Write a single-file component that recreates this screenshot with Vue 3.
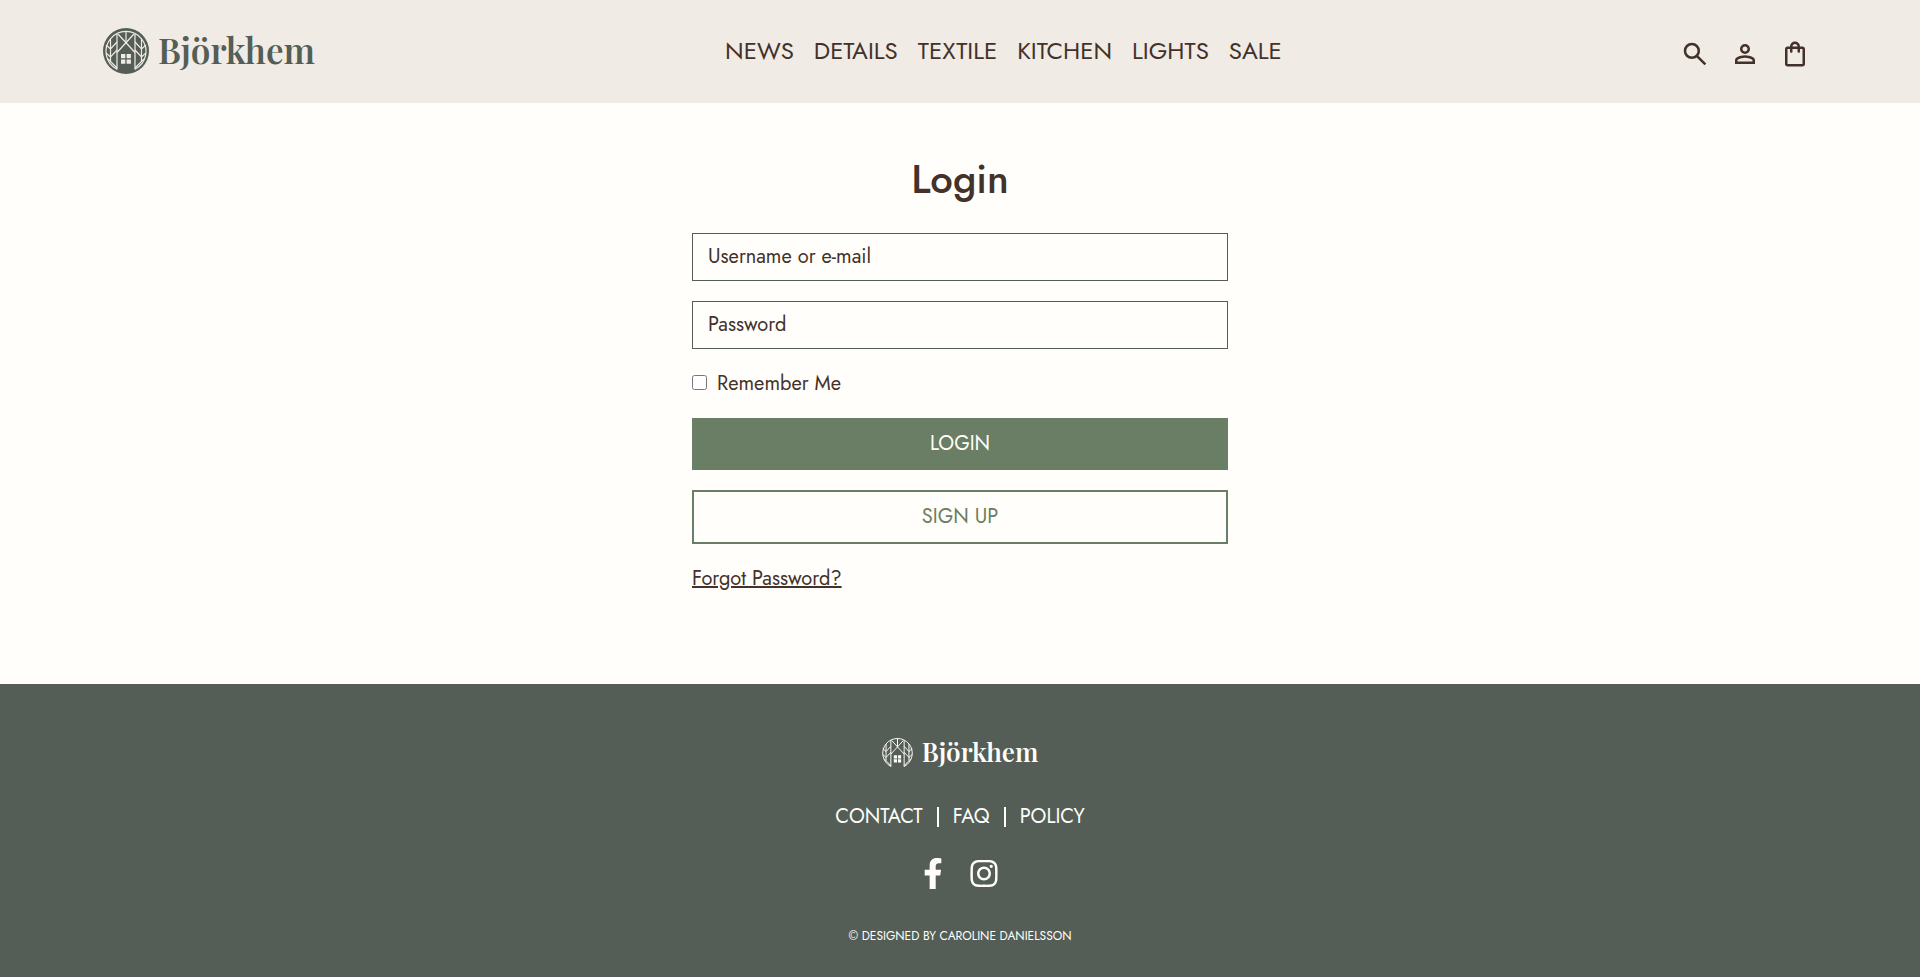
<script setup>
import { ref } from 'vue'

const categories = ['News', 'Details', 'Textile', 'Kitchen', 'Lights', 'Sale']
const footerLinks = ['Contact', 'FAQ', 'Policy']
const username = ref('')
const password = ref('')
const remember = ref(false)
</script>

<template>
  <div class="page">
    <header class="header">
      <a href="#" class="brand">
        <svg class="brand-mark" viewBox="0 0 46 46" aria-hidden="true">
          <circle cx="23" cy="23" r="23" fill="#545e56" />
          <g fill="none" stroke="#f0ebe5" stroke-width="1.2">
            <path d="M14 41.2A20 20 0 1 1 32 41.2" />
            <path d="M14 6V41.5M32 6V41.5M7.5 11V33M38.5 11V33M23 3V14" />
            <path d="M14 24.5L31 6M32 24.5L15 6" />
            <path d="M3 17L7.5 21L14 14M3 25L7.5 29L14 22M5 31L14 40" />
            <path d="M43 17L38.5 21L32 14M43 25L38.5 29L32 22M41 31L32 40" />
          </g>
          <path fill="#f0ebe5" d="M18 26h4.3v4.3H18zM23.6 26h4.3v4.3h-4.3zM18 31.5h4.3v4.3H18zM23.6 31.5h4.3v4.3h-4.3z" />
        </svg>
        <span>Björkhem</span>
      </a>
      <nav class="nav" aria-label="Categories">
        <a v-for="item in categories" :key="item" href="#">{{ item }}</a>
      </nav>
      <div class="tools">
        <button type="button" aria-label="Search">
          <svg viewBox="0 -960 960 960"><path d="M784-120 532-372q-30 24-69 38t-83 14q-109 0-184.5-75.5T120-580q0-109 75.5-184.5T380-840q109 0 184.5 75.5T640-580q0 44-14 83t-38 69l252 252-56 56ZM380-400q75 0 127.5-52.5T560-580q0-75-52.5-127.5T380-760q-75 0-127.5 52.5T200-580q0 75 52.5 127.5T380-400Z" /></svg>
        </button>
        <button type="button" aria-label="Account">
          <svg viewBox="0 -960 960 960"><path d="M480-480q-66 0-113-47t-47-113q0-66 47-113t113-47q66 0 113 47t47 113q0 66-47 113t-113 47ZM160-160v-112q0-34 17.5-62.5T224-378q62-31 126-46.5T480-440q66 0 130 15.5T736-378q29 15 46.5 43.5T800-272v112H160Zm80-80h480v-32q0-11-5.5-20T700-306q-54-27-109-40.5T480-360q-56 0-111 13.5T260-306q-9 5-14.5 14t-5.5 20v32Zm240-320q33 0 56.5-23.5T560-640q0-33-23.5-56.5T480-720q-33 0-56.5 23.5T400-640q0 33 23.5 56.5T480-560Z" /></svg>
        </button>
        <button type="button" aria-label="Shopping bag">
          <svg viewBox="0 -960 960 960"><path d="M240-80q-33 0-56.5-23.5T160-160v-480q0-33 23.5-56.5T240-720h80q0-66 47-113t113-47q66 0 113 47t47 113h80q33 0 56.5 23.5T800-640v480q0 33-23.5 56.5T720-80H240Zm0-80h480v-480h-80v80q0 17-11.5 28.5T600-520q-17 0-28.5-11.5T560-560v-80H400v80q0 17-11.5 28.5T360-520q-17 0-28.5-11.5T320-560v-80h-80v480Zm160-560h160q0-33-23.5-56.5T480-800q-33 0-56.5 23.5T400-720Z" /></svg>
        </button>
      </div>
    </header>

    <main class="main">
      <h1>Login</h1>
      <form class="form" @submit.prevent>
        <input v-model="username" class="field" type="text" placeholder="Username or e-mail" aria-label="Username or e-mail" />
        <input v-model="password" class="field" type="password" placeholder="Password" aria-label="Password" />
        <label class="remember">
          <input v-model="remember" type="checkbox" />
          <span>Remember Me</span>
        </label>
        <button type="submit" class="btn btn-solid">Login</button>
        <button type="button" class="btn btn-outline">Sign up</button>
        <a href="#" class="forgot">Forgot Password?</a>
      </form>
    </main>

    <footer class="footer">
      <a href="#" class="brand brand-small">
        <svg class="brand-mark" viewBox="2 2 42 42" aria-hidden="true">
          <g fill="none" stroke="#fffefa" stroke-width="1.3">
            <path d="M14 41.2A20 20 0 1 1 32 41.2" />
            <path d="M14 6V41.5M32 6V41.5M7.5 11V33M38.5 11V33M23 3V14" />
            <path d="M14 24.5L31 6M32 24.5L15 6" />
            <path d="M3 17L7.5 21L14 14M3 25L7.5 29L14 22M5 31L14 40" />
            <path d="M43 17L38.5 21L32 14M43 25L38.5 29L32 22M41 31L32 40" />
          </g>
          <path fill="#fffefa" d="M18 26h4.3v4.3H18zM23.6 26h4.3v4.3h-4.3zM18 31.5h4.3v4.3H18zM23.6 31.5h4.3v4.3h-4.3z" />
        </svg>
        <span>Björkhem</span>
      </a>
      <nav class="footer-nav" aria-label="Footer">
        <template v-for="(item, i) in footerLinks" :key="item">
          <span v-if="i" class="divider"></span>
          <a href="#">{{ item }}</a>
        </template>
      </nav>
      <div class="social">
        <a href="#" aria-label="Facebook">
          <svg width="20" height="31" viewBox="0 0 320 512"><path d="M279.14 288l14.22-92.66h-88.91v-60.13c0-25.35 12.42-50.06 52.24-50.06h40.42V6.26S260.43 0 225.36 0c-73.22 0-121.08 44.38-121.08 124.72v70.62H22.89V288h81.39v224h100.17V288z" /></svg>
        </a>
        <a href="#" aria-label="Instagram">
          <svg width="28" height="31" viewBox="0 0 448 512"><path d="M224.1 141c-63.6 0-114.9 51.3-114.9 114.9s51.3 114.9 114.9 114.9S339 319.5 339 255.9 287.7 141 224.1 141zm0 189.6c-41.1 0-74.7-33.5-74.7-74.7s33.5-74.7 74.7-74.7 74.7 33.5 74.7 74.7-33.6 74.7-74.7 74.7zm146.4-194.3c0 14.9-12 26.8-26.8 26.8-14.9 0-26.8-12-26.8-26.8s12-26.8 26.8-26.8 26.8 12 26.8 26.8zm76.1 27.2c-1.7-35.9-9.9-67.7-36.2-93.9-26.2-26.2-58-34.4-93.9-36.2-37-2.1-147.9-2.1-184.9 0-35.8 1.7-67.6 9.9-93.9 36.1s-34.4 58-36.2 93.9c-2.1 37-2.1 147.9 0 184.9 1.7 35.9 9.9 67.7 36.2 93.9s58 34.4 93.9 36.2c37 2.1 147.9 2.1 184.9 0 35.9-1.7 67.7-9.9 93.9-36.2 26.2-26.2 34.4-58 36.2-93.9 2.1-37 2.1-147.8 0-184.8zM398.8 388c-7.8 19.6-22.9 34.7-42.6 42.6-29.5 11.7-99.5 9-132.1 9s-102.7 2.6-132.1-9c-19.6-7.8-34.7-22.9-42.6-42.6-11.7-29.5-9-99.5-9-132.1s-2.6-102.7 9-132.1c7.8-19.6 22.9-34.7 42.6-42.6 29.5-11.7 99.5-9 132.1-9s102.7-2.6 132.1 9c19.6 7.8 34.7 22.9 42.6 42.6 11.7 29.5 9 99.5 9 132.1s2.7 102.7-9 132.1z" /></svg>
        </a>
      </div>
      <p class="credit">© Designed by Caroline Danielsson</p>
    </footer>
  </div>
</template>

<style>
body {
  background: #fffefa;
}
</style>

<style scoped>
.page {
  min-height: 100vh;
  display: flex;
  flex-direction: column;
  font-family: Jost, Lato, sans-serif;
  font-size: 20px;
  line-height: 28px;
  color: #43312a;
}
a {
  color: inherit;
  text-decoration: none;
}
.header {
  display: flex;
  justify-content: space-between;
  align-items: center;
  padding: 28px 110px 29px 103px;
  background: #f0ebe5;
}
.brand {
  display: flex;
  align-items: center;
  gap: 9px;
  font: 600 35px/42px "Playfair Display", "Liberation Serif", serif;
  color: #545e56;
}
.brand span {
  padding-bottom: 2px;
}
.header .brand {
  padding-right: 12px;
}
.brand-mark {
  width: 46px;
  height: 46px;
}
.nav {
  display: flex;
  gap: 20px;
  font-size: 24px;
  text-transform: uppercase;
}
.tools {
  display: flex;
  gap: 20px;
  padding-top: 6px;
}
.tools button {
  display: flex;
  padding: 0;
  border: 0;
  background: none;
  color: inherit;
  cursor: pointer;
}
.tools svg {
  width: 30px;
  height: 30px;
  fill: currentColor;
}
.main {
  flex: 1;
  padding: 47px 20px 90px;
}
h1 {
  margin: 0 0 25px;
  text-align: center;
  font-size: 40px;
  font-weight: 500;
  line-height: 58px;
}
.form {
  display: flex;
  flex-direction: column;
  gap: 20px;
  max-width: 536px;
  margin: 0 auto;
}
.field {
  box-sizing: border-box;
  width: 100%;
  height: 48px;
  padding: 0 15px 2px;
  border: 1px solid #545e56;
  border-radius: 0;
  background: transparent;
  font: inherit;
  color: inherit;
}
.field::placeholder {
  color: inherit;
  opacity: 1;
}
.remember {
  display: flex;
  align-items: center;
  gap: 10px;
  line-height: 29px;
}
.remember input {
  width: 15px;
  height: 15px;
  margin: 0 0 3px;
}
.btn {
  padding: 12px;
  border: 0;
  font: inherit;
  text-transform: uppercase;
  cursor: pointer;
}
.btn-solid {
  background: #697e65;
  color: #fffefa;
}
.btn-outline {
  padding: 11px;
  border: 2px solid #697e65;
  background: transparent;
  color: #697e65;
}
.forgot {
  align-self: flex-start;
  line-height: 30px;
  text-decoration: underline;
}
.footer {
  display: flex;
  flex-direction: column;
  align-items: center;
  padding: 53px 20px 32px;
  background: #545e56;
  color: #fffefa;
}
.brand-small {
  font-size: 26px;
  line-height: 28px;
  color: #fffefa;
}
.brand-small .brand-mark {
  width: 31px;
  height: 32px;
}
.footer-nav {
  display: flex;
  align-items: center;
  gap: 14px;
  margin-top: 34px;
  text-transform: uppercase;
}
.divider {
  width: 2px;
  height: 20px;
  background: currentColor;
}
.social {
  display: flex;
  gap: 27px;
  margin-top: 27px;
}
.social a {
  display: flex;
}
.social svg {
  fill: currentColor;
}
.credit {
  margin: 37px 0 0;
  font-size: 12px;
  line-height: 20px;
  text-transform: uppercase;
}
</style>
